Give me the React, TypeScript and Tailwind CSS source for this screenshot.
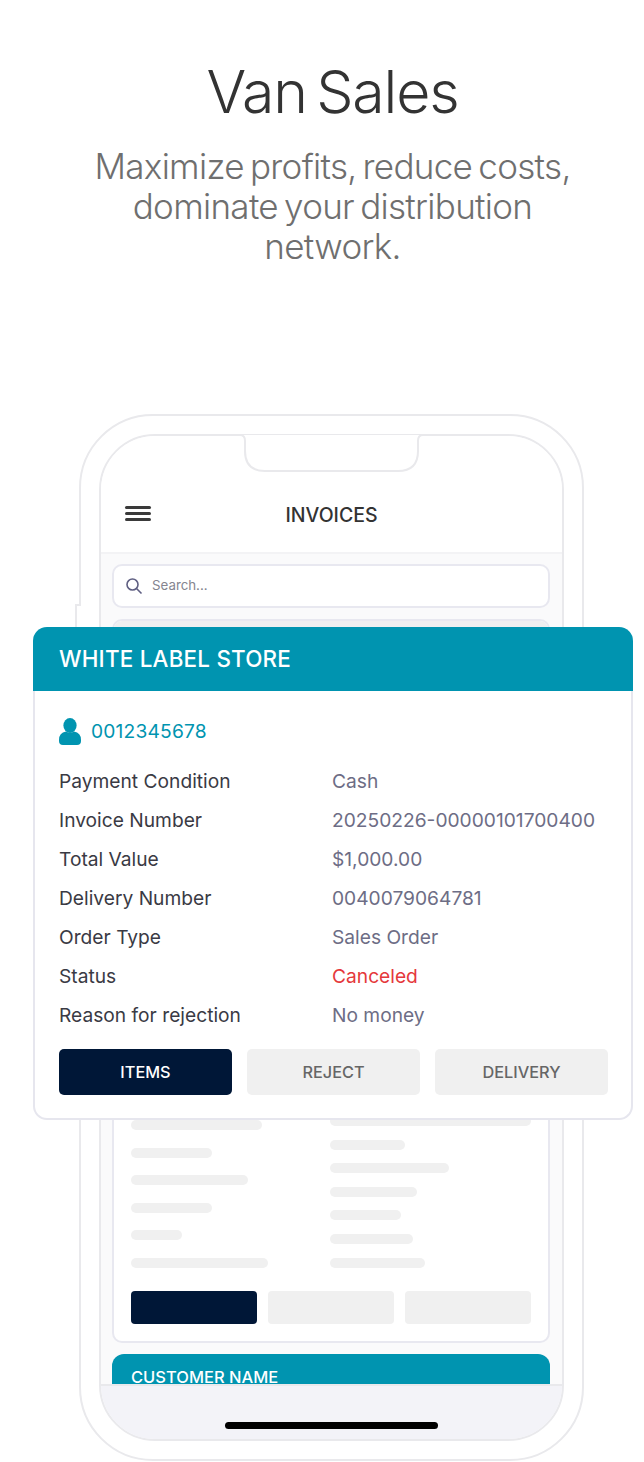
import React from "react";

const details = [
  { label: "Payment Condition", value: "Cash" },
  { label: "Invoice Number", value: "20250226-00000101700400" },
  { label: "Total Value", value: "$1,000.00" },
  { label: "Delivery Number", value: "0040079064781" },
  { label: "Order Type", value: "Sales Order" },
  { label: "Status", value: "Canceled", danger: true },
  { label: "Reason for rejection", value: "No money" },
];

const leftBars = ["w-[131px]", "w-[81px]", "w-[117px]", "w-[81px]", "w-[51px]", "w-[137px]"];
const rightBars = ["w-[75px]", "w-[119px]", "w-[87px]", "w-[71px]", "w-[83px]", "w-[95px]"];

/* ── Foreground invoice card ── */
const InvoiceCard = () => (
  <div className="absolute left-[33px] top-[627px] w-[600px] h-[493px] flex flex-col">
    <div className="h-[64px] shrink-0 rounded-t-[14px] bg-[#0094b0] flex items-center pl-[26px]">
      <span className="text-[22.4px] font-medium text-white tracking-[0.01em]">WHITE LABEL STORE</span>
    </div>
    <div className="flex-1 rounded-b-[14px] border-x-2 border-b-2 border-[#e6e6ee] bg-white pl-[24px] pr-[23px] pt-[25px]">
      <div className="flex items-center gap-[10px] h-[30px]">
        <svg width="22" height="27" viewBox="0 0 22 27" fill="#0094b0">
          <ellipse cx="11" cy="7.5" rx="6.6" ry="7.5" />
          <path d="M0 22Q0 14.5 7 13.5Q11 16 15 13.5Q22 14.5 22 22V23a4 4 0 0 1-4 4H4a4 4 0 0 1-4-4z" />
        </svg>
        <span className="text-[19.2px] text-[#0094b0] tracking-[0.01em]">0012345678</span>
      </div>
      <div className="mt-[16px] flex flex-col">
        {details.map(({ label, value, danger }) => (
          <div key={label} className="flex items-center h-[39px] text-[19.2px]">
            <span className="w-[273px] text-[#3a3a44]">{label}</span>
            <span className={danger ? "text-[#e5383b]" : "text-[#6d6d85]"}>{value}</span>
          </div>
        ))}
      </div>
      <div className="mt-[14px] grid grid-cols-3 gap-[15px]">
        <div className="h-[46px] rounded-[5px] bg-[#001737] flex items-center justify-center text-[16.3px] font-medium text-white">
          ITEMS
        </div>
        <div className="h-[46px] rounded-[5px] bg-[#f0f0f0] flex items-center justify-center text-[16.3px] font-medium text-[#666666]">
          REJECT
        </div>
        <div className="h-[46px] rounded-[5px] bg-[#f0f0f0] flex items-center justify-center text-[16.3px] font-medium text-[#666666]">
          DELIVERY
        </div>
      </div>
    </div>
  </div>
);

/* ── Phone mockup behind the card ── */
const Phone = () => (
  <div className="absolute left-[79px] top-[414px] w-[505px] h-[1047px] rounded-[74px] border-2 border-[#e9e9ec] bg-white p-[18px]">
    {/* side button */}
    <div className="absolute left-[-6px] top-[188px] w-[6px] h-[40px] border-l-2 border-t-2 border-[#e9e9ec] bg-white" />
    <div className="relative w-full h-full rounded-[56px] border-2 border-[#e9e9ec] overflow-hidden flex flex-col bg-[#fafafb]">
      <div className="h-[118px] shrink-0 bg-white border-b-2 border-[#f3f3f5] relative">
        <div className="absolute left-[24px] top-[70px] w-[26px] flex flex-col gap-[3px]">
          <div className="h-[3px] rounded-full bg-[#3a3a3a]" />
          <div className="h-[3px] rounded-full bg-[#3a3a3a]" />
          <div className="h-[3px] rounded-full bg-[#3a3a3a]" />
        </div>
        <div className="pt-[65px] text-center text-[19.5px] leading-[28px] font-medium text-[#333333]">INVOICES</div>
      </div>
      <div className="flex-1 min-h-0 overflow-hidden pl-[11px] pr-[12px] pt-[10px] flex flex-col">
        <div className="h-[44px] shrink-0 rounded-[10px] border-2 border-[#e8e8f0] bg-white flex items-center pl-[11px] gap-[9px]">
          <svg width="18" height="18" viewBox="0 0 18 18" fill="none" stroke="#5f5f82" strokeWidth="1.6">
            <circle cx="7.5" cy="7.5" r="5.5" />
            <path d="M11.5 11.5L16.5 16.5" />
          </svg>
          <span className="text-[13.3px] text-[#85858f]">Search...</span>
        </div>
        <div className="mt-[11px] h-[724px] shrink-0 rounded-[10px] border-2 border-[#e8e8f0] bg-white relative overflow-hidden">
          <div className="h-[64px] bg-[#efeff0]" />
          <div className="flex absolute left-[17px] right-[17px] top-[499px]">
            <div className="w-[199px] flex flex-col gap-[17.6px]">
              {leftBars.map((w, i) => (
                <div key={i} className={`${w} h-[10px] rounded-full bg-[#f0f0f0]`} />
              ))}
            </div>
            <div className="flex-1 -mt-[4px] flex flex-col gap-[13.6px]">
              <div className="w-full h-[10px] rounded-full bg-[#f0f0f0]" />
              {rightBars.map((w, i) => (
                <div key={i} className={`${w} h-[10px] rounded-full bg-[#f0f0f0]`} />
              ))}
            </div>
          </div>
          <div className="absolute left-[17px] right-[17px] top-[670px] grid grid-cols-3 gap-[11px]">
            <div className="h-[33px] rounded-[4px] bg-[#001737]" />
            <div className="h-[33px] rounded-[4px] bg-[#f0f0f0]" />
            <div className="h-[33px] rounded-[4px] bg-[#f0f0f0]" />
          </div>
        </div>
        <div className="mt-[11px] h-[60px] shrink-0 rounded-t-[12px] bg-[#0094b0] pl-[19px] pt-[12px] text-[16.5px] leading-[22px] font-medium text-white">
          CUSTOMER NAME
        </div>
      </div>
      <div className="absolute left-0 right-0 bottom-0 h-[55px] bg-[#f3f3f8] border-t-2 border-[#e9e9ec] flex justify-center">
        <div className="mt-[36px] w-[213px] h-[7px] rounded-full bg-black" />
      </div>
    </div>
    {/* notch */}
    <svg className="absolute left-[154px] top-[17px]" width="193" height="41" viewBox="0 0 193 41" fill="#ffffff" stroke="#e9e9ec" strokeWidth="2">
      <path d="M0 2H5Q10 2 10 8V18Q10 38 30 38H163Q183 38 183 18V8Q183 2 188 2H193" />
    </svg>
  </div>
);

export default function App() {
  return (
    <div className="relative w-[644px] h-[1462px] bg-white overflow-hidden font-['Inter',sans-serif]">
      <div className="pt-[58px] pl-[21px] flex flex-col items-center text-center">
        <h1 className="text-[59px] leading-[68px] font-light text-[#333333] tracking-[-0.02em] [word-spacing:-6px]">
          Van Sales
        </h1>
        <p className="mt-[20px] w-[500px] text-[35px] leading-[40px] font-light text-[#6f6f6f] tracking-[-0.02em] [word-spacing:-3px]">
          Maximize profits, reduce costs, dominate your distribution network.
        </p>
      </div>
      <Phone />
      <InvoiceCard />
    </div>
  );
}
